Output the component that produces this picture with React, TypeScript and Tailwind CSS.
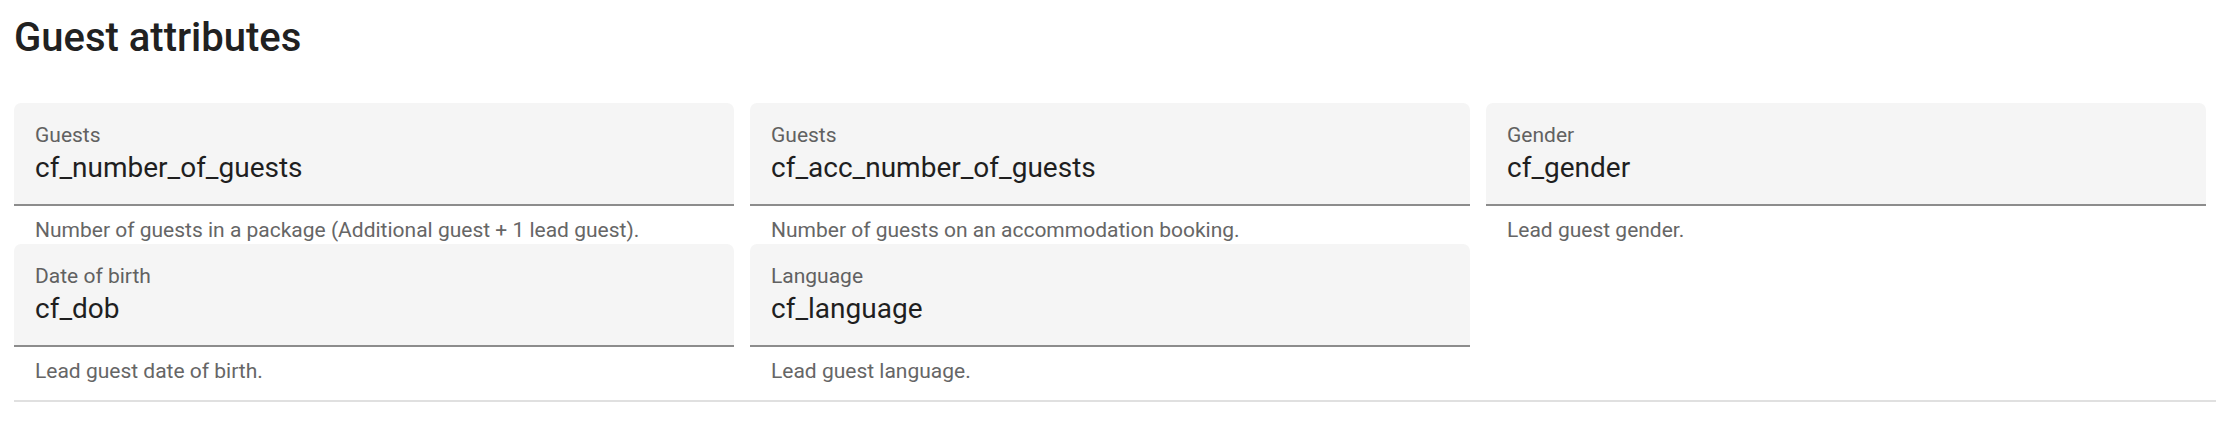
import React from "react";

type Field = { label: string; value: string; hint: string };

const fields: Field[] = [
  { label: "Guests", value: "cf_number_of_guests", hint: "Number of guests in a package (Additional guest + 1 lead guest)." },
  { label: "Guests", value: "cf_acc_number_of_guests", hint: "Number of guests on an accommodation booking." },
  { label: "Gender", value: "cf_gender", hint: "Lead guest gender." },
  { label: "Date of birth", value: "cf_dob", hint: "Lead guest date of birth." },
  { label: "Language", value: "cf_language", hint: "Lead guest language." },
];

function FieldBox({ f }: { f: Field }) {
  return (
    <div className="flex flex-col">
      <div className="h-[103px] rounded-t-[7px] bg-[#f5f5f5] border-b-2 border-[#8c8c8c] px-[21px] pt-[20px]">
        <div className="text-[21px] leading-[24px] text-[#616161]">{f.label}</div>
        <div className="mt-[5px] text-[28px] leading-[32px] text-[#1f1f1f]">{f.value}</div>
      </div>
      <div className="h-[38px] px-[21px] pt-[12px] text-[21px] leading-[24px] text-[#666666]">{f.hint}</div>
    </div>
  );
}

export default function App() {
  return (
    <div className="w-[2216px] h-[426px] bg-white font-['Roboto',_'Liberation_Sans',_sans-serif]">
      <div className="pl-[14px] pt-[14px]">
        <h1 className="text-[40px] leading-[48px] font-medium text-[#212121]">Guest attributes</h1>
        <div className="mt-[41px] pr-[10px] pb-[15px] border-b-2 border-[#e0e0e0] grid grid-cols-3 gap-x-[16px]">
          {fields.map((f, i) => (
            <FieldBox key={i} f={f} />
          ))}
        </div>
      </div>
    </div>
  );
}
